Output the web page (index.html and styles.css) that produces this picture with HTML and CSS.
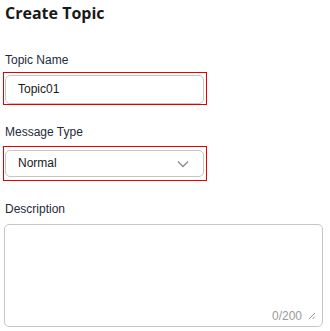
FILE: index.html
```
<!DOCTYPE html>
<html>
<head>
<meta charset="utf-8">
<link rel="stylesheet" href="styles.css">
</head>
<body>
<div class="page">
  <h1 class="title">Create Topic</h1>
  <div class="field">
    <div class="label">Topic Name</div>
    <div class="hl">
      <div class="input">Topic01</div>
    </div>
  </div>
  <div class="field">
    <div class="label">Message Type</div>
    <div class="hl">
      <div class="input select">
        <span>Normal</span>
        <svg class="chev" width="12" height="8" viewBox="0 0 12 8"><path d="M1 1.5 L6 6.5 L11 1.5" fill="none" stroke="#8c8c8c" stroke-width="1.3"/></svg>
      </div>
    </div>
  </div>
  <div class="field">
    <div class="label">Description</div>
    <div class="textarea">
      <div class="counter">0/200
        <svg class="grip" width="8" height="8" viewBox="0 0 8 8"><path d="M7 1 L1 7 M7 4.5 L4.5 7" stroke="#999" stroke-width="1"/></svg>
      </div>
    </div>
  </div>
</div>
</body>
</html>
```
FILE: styles.css
```
html, body { margin: 0; padding: 0; background: #fff; }
body { font-family: "Liberation Sans", Arial, sans-serif; color: #252b3a; }
.page { padding: 0 7px 0 4px; }
.title {
  margin: 0;
  padding: 1px 0 0 1px;
  font-family: "Open Sans", "Noto Sans", sans-serif;
  font-size: 16px;
  font-weight: 700;
  line-height: 24px;
  color: #191919;
}
.field { display: flex; flex-direction: column; }
.label { font-size: 12px; line-height: 14px; color: #252b3a; padding-left: 1px; }
.field:nth-of-type(1) .label { margin-top: 28px; }
.field:nth-of-type(2) .label { margin-top: 20px; }
.field:nth-of-type(3) .label { margin-top: 21px; }
.hl {
  margin-top: 5px;
  width: 199px;
  margin-left: -1px;
  border: 1px solid #e60000;
  padding: 2px 2px 0 1px;
}
.field:nth-of-type(2) .hl { margin-top: 7px; padding: 3px 2px 3px 1px; }
.field:nth-of-type(2) .input { height: 27px; }
.input {
  box-sizing: border-box;
  height: 29px;
  border: 1px solid #c6c6c6;
  border-radius: 5px;
  padding: 0 12px;
  font-size: 12px;
  line-height: 27px;
  color: #191919;
  display: flex;
  align-items: center;
}
.select { justify-content: space-between; padding-right: 14px; }
.chev { display: block; }
.textarea {
  margin-top: 8px;
  box-sizing: border-box;
  height: 103px;
  border: 1px solid #c6c6c6;
  border-radius: 5px;
  display: flex;
  align-items: flex-end;
  justify-content: flex-end;
}
.counter {
  font-size: 12px;
  color: #9a9a9a;
  line-height: 14px;
  padding: 0 6px 3px 0;
  display: flex;
  align-items: center;
  gap: 6px;
}
.grip { display: block; }
```
